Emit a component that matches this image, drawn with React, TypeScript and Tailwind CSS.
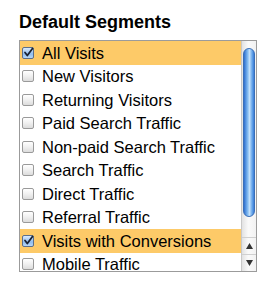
import { clsx } from 'clsx';

const segments = [
  { label: 'All Visits', checked: true },
  { label: 'New Visitors', checked: false },
  { label: 'Returning Visitors', checked: false },
  { label: 'Paid Search Traffic', checked: false },
  { label: 'Non-paid Search Traffic', checked: false },
  { label: 'Search Traffic', checked: false },
  { label: 'Direct Traffic', checked: false },
  { label: 'Referral Traffic', checked: false },
  { label: 'Visits with Conversions', checked: true },
  { label: 'Mobile Traffic', checked: false },
];

function Checkbox({ checked }: { checked: boolean }) {
  return (
    <span
      className={clsx(
        'relative flex h-[12px] w-[12px] shrink-0 items-center justify-center rounded-[2px] border',
        checked
          ? 'border-[#5a6f8c] bg-[linear-gradient(180deg,#dbeafb,#8fbcee_60%,#b7d6f6)]'
          : 'border-[#9a9a9a] bg-[linear-gradient(180deg,#ffffff,#f0f0f0_50%,#dcdcdc)]'
      )}
    >
      {checked && (
        <svg width="11" height="11" viewBox="0 0 11 11" className="absolute -top-[1px] left-[0px]">
          <path d="M2 5.5 L4.3 8.5 L9.5 1.5" fill="none" stroke="#1a2233" strokeWidth="1.8" strokeLinecap="round" strokeLinejoin="round" />
        </svg>
      )}
    </span>
  );
}

export default function App() {
  return (
    <div className="min-h-screen bg-white pl-[19px] pt-[12px] font-['Liberation_Sans',Arial,sans-serif] text-black">
      <h2 className="text-[18px] font-bold leading-[21px]">Default Segments</h2>

      {/* Segment list */}
      <div className="mt-[7px] flex h-[232px] w-[238px] border border-[#9b9b9b]">
        <div className="flex-1 overflow-hidden">
          {segments.map((s) => (
            <div
              key={s.label}
              className={clsx(
                'flex h-[23.5px] shrink-0 items-center pl-[2px] whitespace-nowrap',
                s.checked && 'bg-[#fdca68]'
              )}
            >
              <Checkbox checked={s.checked} />
              <span className="ml-[8px] text-[16.5px] leading-none">{s.label}</span>
            </div>
          ))}
        </div>

        {/* Scrollbar */}
        <div className="flex w-[15px] flex-col border-l border-[#c8c8c8] bg-[linear-gradient(90deg,#e2e2e2,#fafafa_45%,#f2f2f2)]">
          <div className="flex-1 px-[1px] pt-[7px]">
            <div className="h-[169px] rounded-full border border-[#3a6fb8] bg-[linear-gradient(90deg,#2e6fcf,#7fb8f0_35%,#c2e0fb_55%,#6aa8ea_80%,#3a7dd8)]" />
          </div>
          <div className="flex h-[17px] items-center justify-center border-t border-[#d0d0d0]">
            <svg width="7" height="6" viewBox="0 0 7 6">
              <path d="M3.5 0 L7 6 L0 6 Z" fill="#333" />
            </svg>
          </div>
          <div className="flex h-[17px] items-center justify-center border-t border-[#d0d0d0]">
            <svg width="7" height="6" viewBox="0 0 7 6">
              <path d="M0 0 L7 0 L3.5 6 Z" fill="#333" />
            </svg>
          </div>
        </div>
      </div>
    </div>
  );
}
